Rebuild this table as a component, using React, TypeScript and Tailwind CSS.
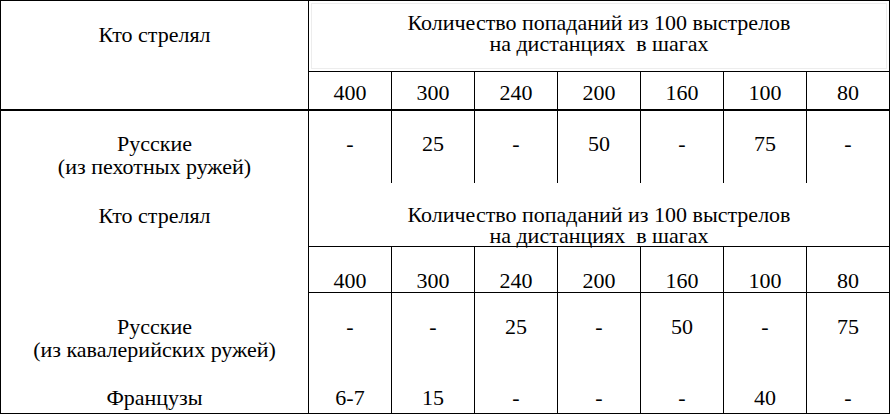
import React from "react";

const dists = ["400", "300", "240", "200", "160", "100", "80"];
const infantry = ["-", "25", "-", "50", "-", "75", "-"];
const cavalry = ["-", "-", "25", "-", "50", "-", "75"];
const french = ["6-7", "15", "-", "-", "-", "40", "-"];

const App: React.FC = () => {
  return (
    <div className="w-[890px] h-[414px] bg-white overflow-hidden">
      <div className="grid w-[890px] grid-cols-[308px_repeat(7,83px)] grid-rows-[71px_39px_72px_64px_46px_120px] border-l border-t border-b border-black font-['Liberation_Serif'] text-[22px] leading-[23px] text-black">
        {/* первая шапка */}
        <div className="row-span-2 border-r border-b-2 border-black pt-[22px] text-center">
          Кто стрелял
        </div>
        <div className="col-span-7 border-r border-b border-black p-[2px]">
          <div className="h-full border border-[#ededed] pt-[8px] text-center leading-[21px]">
            Количество попаданий из 100 выстрелов
            <br />
            на дистанциях{"\u00a0"} в шагах
          </div>
        </div>
        {dists.map((d) => (
          <div key={d} className="border-r border-b-2 border-black pt-[9px] text-center">
            {d}
          </div>
        ))}

        {/* пехотные ружья */}
        <div className="border-r border-black pt-[21px] text-center">
          Русские
          <br />
          (из пехотных ружей)
        </div>
        {infantry.map((v, i) => (
          <div key={i} className="border-r border-black pt-[21px] text-center">
            {v}
          </div>
        ))}

        {/* вторая шапка */}
        <div className="border-r border-black pt-[21px] text-center">Кто стрелял</div>
        <div className="col-span-7 border-r border-b border-black pt-[21px] text-center leading-[21px]">
          Количество попаданий из 100 выстрелов
          <br />
          на дистанциях{"\u00a0"} в шагах
        </div>

        <div className="border-r border-black" />
        {dists.map((d) => (
          <div key={d} className="border-r border-b border-black pt-[22px] text-center">
            {d}
          </div>
        ))}

        {/* кавалерийские ружья и французы */}
        <div className="border-r border-black pt-[22px] text-center">
          Русские
          <br />
          (из кавалерийских ружей)
          <div className="mt-[25px]">Французы</div>
        </div>
        {cavalry.map((v, i) => (
          <div key={i} className="border-r border-black pt-[22px] text-center">
            {v}
            <div className="mt-[48px]">{french[i]}</div>
          </div>
        ))}
      </div>
    </div>
  );
};

export default App;
